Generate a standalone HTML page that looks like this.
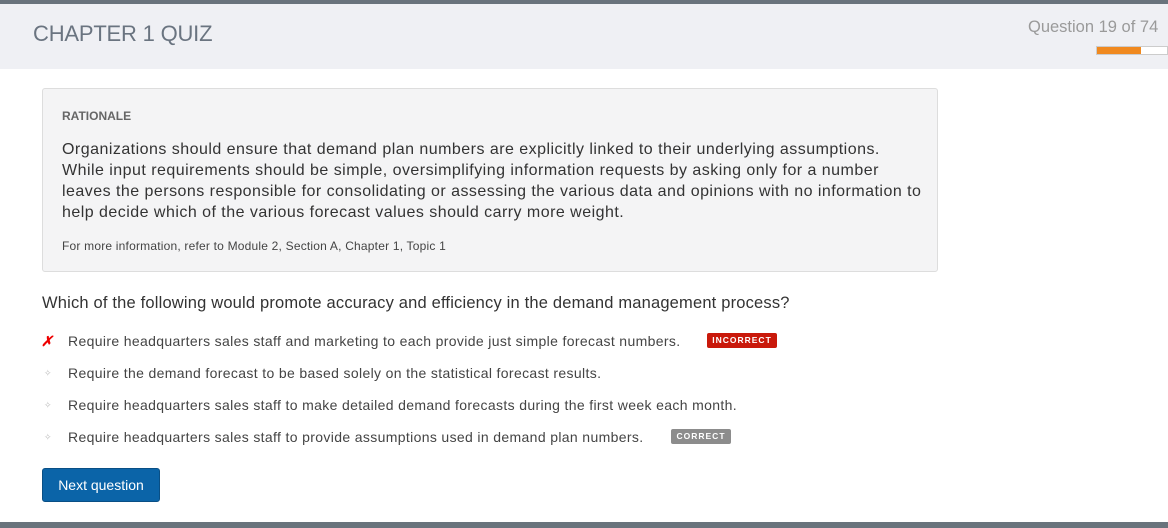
<!DOCTYPE html>
<html><head><style>
body{margin:0;width:1168px;height:528px;background:#fff;font-family:"Liberation Sans",sans-serif;position:relative;overflow:hidden}
.abs{position:absolute}
.top{left:0;top:0;width:1168px;height:4px;background:#69737c}
.hdr{left:0;top:4px;width:1168px;height:65px;background:#eff0f4}
.title{left:33px;top:21px;font-size:22px;color:#6a7480;font-weight:300;letter-spacing:-0.2px}
.qn{left:1028px;top:18px;font-size:16.5px;color:#9a9a9a;white-space:nowrap}
.bar{left:1096px;top:46px;width:72px;height:9px;background:#fff;border:1px solid #ccc;box-sizing:border-box}
.bar div{width:44px;height:7px;background:#f0891f}
.box{left:42px;top:88px;width:896px;height:184px;background:#f4f4f5;border:1px solid #ddd;border-radius:3px;box-sizing:border-box}
.rh{left:62px;top:109px;font-size:12px;font-weight:bold;color:#666}
.rp{left:62px;top:139px;width:880px;font-size:16px;line-height:21px;color:#333;letter-spacing:0.47px;white-space:nowrap}
.rs{left:62px;top:239px;font-size:12px;color:#444;letter-spacing:0.2px}
.q{left:42px;top:294px;font-size:16.5px;color:#333;letter-spacing:0.18px}
.opt{left:68px;font-size:14px;color:#444;white-space:nowrap;letter-spacing:0.35px}
.dot{left:44px;font-size:9px;color:#bbb}
.badge{height:15px;font-size:8.5px;font-weight:bold;color:#fff;letter-spacing:1px;text-align:center;line-height:15px;border-radius:2px}
.btn{left:42px;top:468px;width:118px;height:34px;background:#0b64a8;border:1px solid #094f85;border-radius:3px;box-sizing:border-box;color:#fff;font-size:14px;text-align:center;line-height:32px}
.bot{left:0;top:522px;width:1168px;height:6px;background:#69737c}
</style></head><body>
<div class="abs top"></div>
<div class="abs hdr"></div>
<div class="abs title">CHAPTER 1 QUIZ</div>
<div class="abs qn">Question 19 of 74</div>
<div class="abs bar"><div></div></div>
<div class="abs box"></div>
<div class="abs rh">RATIONALE</div>
<div class="abs rp">Organizations should ensure that demand plan numbers are explicitly linked to their underlying assumptions.<br>While input requirements should be simple, oversimplifying information requests by asking only for a number<br>leaves the persons responsible for consolidating or assessing the various data and opinions with no information to<br>help decide which of the various forecast values should carry more weight.</div>
<div class="abs rs">For more information, refer to Module 2, Section A, Chapter 1, Topic 1</div>
<div class="abs q">Which of the following would promote accuracy and efficiency in the demand management process?</div>
<div class="abs" style="left:41px;top:333px;color:#e00;font-size:14px;font-style:italic;font-weight:bold">✗</div>
<div class="abs opt" style="top:333px">Require headquarters sales staff and marketing to each provide just simple forecast numbers.</div>
<div class="abs badge" style="left:707px;top:333px;width:70px;background:#c9190b">INCORRECT</div>
<div class="abs dot" style="top:368px">✧</div>
<div class="abs opt" style="top:365px">Require the demand forecast to be based solely on the statistical forecast results.</div>
<div class="abs dot" style="top:400px">✧</div>
<div class="abs opt" style="top:397px">Require headquarters sales staff to make detailed demand forecasts during the first week each month.</div>
<div class="abs dot" style="top:432px">✧</div>
<div class="abs opt" style="top:429px">Require headquarters sales staff to provide assumptions used in demand plan numbers.</div>
<div class="abs badge" style="left:671px;top:429px;width:60px;background:#8c8c8c">CORRECT</div>
<div class="abs btn">Next question</div>
<div class="abs bot"></div>
</body></html>
